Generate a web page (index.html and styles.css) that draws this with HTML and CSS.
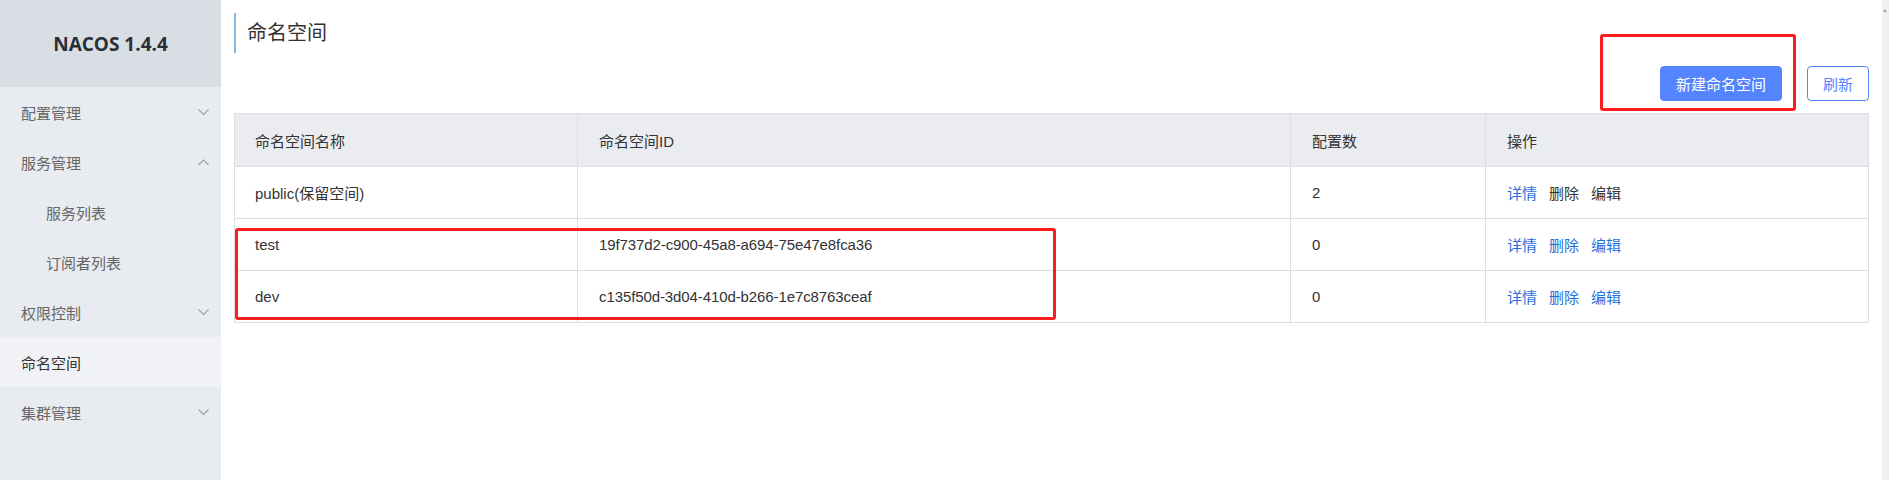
FILE: index.html
```html
<!DOCTYPE html>
<html lang="zh-CN">
<head>
<meta charset="utf-8">
<title>NACOS 1.4.4 - 命名空间</title>
<link rel="stylesheet" href="styles.css">
</head>
<body>
<div class="app">
  <aside class="sidebar">
    <div class="logo">NACOS 1.4.4</div>
    <ul class="menu">
      <li class="menu-item"><span>配置管理</span><svg class="chev" width="11" height="7" viewBox="0 0 11 7"><polyline points="0.5,0.5 5.5,5.5 10.5,0.5"/></svg></li>
      <li class="menu-item"><span>服务管理</span><svg class="chev" width="11" height="7" viewBox="0 0 11 7"><polyline points="0.5,6 5.5,1 10.5,6"/></svg></li>
      <li class="menu-item sub"><span>服务列表</span></li>
      <li class="menu-item sub"><span>订阅者列表</span></li>
      <li class="menu-item"><span>权限控制</span><svg class="chev" width="11" height="7" viewBox="0 0 11 7"><polyline points="0.5,0.5 5.5,5.5 10.5,0.5"/></svg></li>
      <li class="menu-item active"><span>命名空间</span></li>
      <li class="menu-item"><span>集群管理</span><svg class="chev" width="11" height="7" viewBox="0 0 11 7"><polyline points="0.5,0.5 5.5,5.5 10.5,0.5"/></svg></li>
    </ul>
  </aside>
  <main class="main">
    <h1 class="page-title">命名空间</h1>
    <div class="toolbar">
      <div class="btn-wrap">
        <button class="btn btn-primary">新建命名空间</button>
        <div class="mark mark-btn"></div>
      </div>
      <button class="btn btn-outline">刷新</button>
    </div>
    <div class="table">
      <div class="row head">
        <div class="cell">命名空间名称</div>
        <div class="cell">命名空间ID</div>
        <div class="cell">配置数</div>
        <div class="cell">操作</div>
      </div>
      <div class="row">
        <div class="cell">public(保留空间)</div>
        <div class="cell"></div>
        <div class="cell">2</div>
        <div class="cell ops"><a class="link">详情</a><a class="link dis">删除</a><a class="link dis">编辑</a></div>
      </div>
      <div class="row">
        <div class="cell">test</div>
        <div class="cell id">19f737d2-c900-45a8-a694-75e47e8fca36</div>
        <div class="cell">0</div>
        <div class="cell ops"><a class="link">详情</a><a class="link">删除</a><a class="link">编辑</a></div>
      </div>
      <div class="row">
        <div class="cell">dev</div>
        <div class="cell id">c135f50d-3d04-410d-b266-1e7c8763ceaf</div>
        <div class="cell">0</div>
        <div class="cell ops"><a class="link">详情</a><a class="link">删除</a><a class="link">编辑</a></div>
      </div>
      <div class="mark mark-rows"></div>
    </div>
  </main>
  <div class="scrollbar"><span class="arrow"></span></div>
</div>
</body>
</html>
```

FILE: styles.css
```css
* { box-sizing: border-box; }
html, body { margin: 0; padding: 0; }
body {
  font-family: "Liberation Sans", "Noto Sans CJK SC", sans-serif;
  font-size: 15px;
  color: #333;
  background: #fff;
}
.app {
  display: flex;
  width: 1889px;
  height: 480px;
  overflow: hidden;
}
.sidebar {
  width: 221px;
  flex: none;
  background: #e8ebf0;
  display: flex;
  flex-direction: column;
}
.logo {
  height: 87px;
  background: #d9dde4;
  display: flex;
  align-items: center;
  justify-content: center;
  font-family: "Open Sans", "Noto Sans", sans-serif;
  font-weight: 700;
  font-size: 19px;
  color: #2b2f36;
}
.menu {
  list-style: none;
  margin: 0;
  padding: 0;
}
.menu-item {
  height: 50px;
  display: flex;
  align-items: center;
  justify-content: space-between;
  padding: 0 12px 0 21px;
  color: #666;
  font-family: "Noto Sans CJK SC", sans-serif;
  font-size: 15px;
}
.menu-item.sub { padding-left: 46px; }
.menu-item.active { background: #f0f2f5; color: #333; }
.chev { fill: none; stroke: #9aa0aa; stroke-width: 1.1; }

.main {
  flex: 1;
  padding: 13px 13px 0 13px;
  display: flex;
  flex-direction: column;
}
.page-title {
  margin: 0;
  height: 40px;
  line-height: 38px;
  border-left: 2px solid #88b7e0;
  padding-left: 11px;
  font-family: "Noto Sans CJK SC", sans-serif;
  font-weight: 400;
  font-size: 20px;
  color: #333;
}
.toolbar {
  display: flex;
  justify-content: flex-end;
  align-items: center;
  gap: 25px;
  margin-top: 13px;
  margin-bottom: 12px;
}
.btn-wrap { position: relative; display: flex; }
.btn {
  height: 35px;
  border-radius: 4px;
  font-family: "Noto Sans CJK SC", sans-serif;
  font-size: 15px;
  padding: 0;
  cursor: pointer;
}
.btn-primary {
  width: 122px;
  background: #5584ff;
  border: 1px solid #5584ff;
  color: #fff;
}
.btn-outline {
  width: 62px;
  background: #fff;
  border: 1px solid #5584ff;
  color: #5584ff;
}
.mark {
  position: absolute;
  border: 3px solid #fe1c1c;
  border-radius: 3px;
  pointer-events: none;
}
.mark-btn { left: -60px; right: -14px; top: -32px; bottom: -10px; }

.table {
  position: relative;
  border: 1px solid #dcdee3;
  border-bottom: none;
}
.row {
  display: grid;
  grid-template-columns: 342px 713px 195px 1fr;
  height: 52px;
  border-bottom: 1px solid #dcdee3;
}
.row.head { height: 53px; background: #ebecf0; }
.cell {
  display: flex;
  align-items: center;
  padding-left: 21px;
  border-left: 1px solid #dcdee3;
}
.cell:first-child { border-left: none; padding-left: 20px; }
.cell.id { letter-spacing: -0.1px; }
.ops { gap: 12px; }
.link { color: #1f6fdc; cursor: pointer; font-family: "Noto Sans CJK SC", sans-serif; }
.link.dis { color: #333; }
.mark-rows { left: 0; top: 114px; width: 821px; height: 92px; }

.scrollbar {
  width: 7px;
  flex: none;
  background: #f0f0f0;
  position: relative;
}
.arrow {
  position: absolute;
  top: 9px;
  left: 1px;
  width: 0;
  height: 0;
  border-left: 2px solid transparent;
  border-right: 2px solid transparent;
  border-bottom: 3px solid #a0a0a0;
}
```
